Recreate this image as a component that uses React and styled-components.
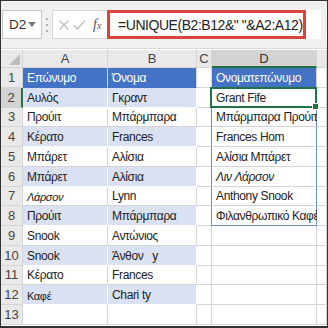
import React from "react";
import styled, { createGlobalStyle, css } from "styled-components";

const GlobalStyle = createGlobalStyle`
  html, body {
    margin: 0;
    padding: 0;
    background: #ffffff;
  }
  * {
    box-sizing: border-box;
  }
`;

const BLUE = "#4472c4";
const BAND = "#d9e1f2";
const GRID = "#d4d4d4";
const GREEN = "#217346";

const Frame = styled.div`
  width: 328px;
  height: 328px;
  border: 1px solid #333;
  border-bottom-width: 2px;
  overflow: hidden;
  font-family: "Liberation Sans", Arial, sans-serif;
  background: #fff;
  display: flex;
  flex-direction: column;
`;

const FormulaBar = styled.div`
  height: 48px;
  flex: none;
  background: #f0f0f0;
  display: flex;
  align-items: center;
  padding: 0 6px 0 1px;
  border-bottom: 1px solid #dadada;
`;

const NameBox = styled.div`
  width: 40px;
  height: 29px;
  flex: none;
  background: #fff;
  border: 1px solid #c6c6c6;
  display: flex;
  align-items: center;
  justify-content: space-between;
  padding: 0 5px 0 6px;
  font-size: 13.5px;
  color: #333;
`;

const Caret = styled.span`
  width: 0;
  height: 0;
  border-left: 4px solid transparent;
  border-right: 4px solid transparent;
  border-top: 5px solid #777;
`;

const Dots = styled.div`
  width: 8px;
  height: 14px;
  margin: 0 1px;
  display: flex;
  flex-direction: column;
  align-items: center;
  justify-content: space-between;
  span {
    width: 2px;
    height: 2px;
    background: #b0b0b0;
  }
`;

const IconBox = styled.div`
  width: 54px;
  height: 29px;
  flex: none;
  background: #fff;
  border: 1px solid #d6d6d6;
  border-right: none;
  display: flex;
  align-items: center;
  gap: 3px;
  padding-left: 5px;
`;

const Fx = styled.span`
  font-family: "Liberation Serif", "Times New Roman", serif;
  font-style: italic;
  font-size: 14px;
  color: #555;
  margin-left: 4px;
  sub {
    font-size: 10px;
    vertical-align: baseline;
  }
`;

const FormulaInput = styled.div`
  flex: 1;
  height: 29px;
  background: #fff;
  display: flex;
  align-items: center;
`;

const Highlight = styled.div`
  height: 29px;
  width: 199px;
  margin-left: 1px;
  border: 3px solid #d8453f;
  display: flex;
  align-items: center;
  padding-left: 8px;
  font-size: 14px;
  letter-spacing: -0.45px;
  color: #222;
  white-space: pre;
`;

const Sheet = styled.div`
  display: grid;
  grid-template-columns: 22px 85px 89px 15px 105px 1fr;
  grid-template-rows: 18px repeat(13, 19.75px);
  margin-top: 1px;
`;

const Corner = styled.div`
  background: #e9e9e9;
  border-right: 1px solid ${GRID};
  border-bottom: 1px solid ${GRID};
  position: relative;
  &::after {
    content: "";
    position: absolute;
    right: 2px;
    bottom: 2px;
    border-left: 11px solid transparent;
    border-bottom: 11px solid #bdbdbd;
  }
`;

const ColHead = styled.div`
  background: ${(p) => (p.$active ? "#d3d3d3" : "#e9e9e9")};
  border-right: 1px solid ${GRID};
  border-bottom: ${(p) => (p.$active ? `2px solid ${GREEN}` : `1px solid ${GRID}`)};
  color: ${(p) => (p.$active ? "#333" : "#444")};
  font-size: 13px;
  display: flex;
  align-items: center;
  justify-content: center;
`;

const RowHead = styled.div`
  background: ${(p) => (p.$active ? "#d3d3d3" : "#e9e9e9")};
  border-bottom: 1px solid ${GRID};
  border-right: ${(p) => (p.$active ? `2px solid ${GREEN}` : `1px solid ${GRID}`)};
  color: #444;
  font-size: 13px;
  display: flex;
  align-items: flex-end;
  justify-content: center;
  padding-bottom: 2px;
`;

const Cell = styled.div`
  background: ${(p) => (p.$fill === "head" ? BLUE : p.$fill === "band" ? BAND : "#fff")};
  color: ${(p) => (p.$fill === "head" ? "#fff" : "#222")};
  border-right: 1px solid ${(p) => (p.$fill === "band" ? "#fff" : GRID)};
  border-bottom: 1px solid ${(p) => (p.$fill === "head" ? BLUE : p.$fill === "band" ? "#fff" : GRID)};
  font-size: ${(p) => (p.$small ? "11px" : "12px")};
  letter-spacing: -0.35px;
  font-style: ${(p) => (p.$italic ? "italic" : "normal")};
  display: flex;
  align-items: flex-end;
  padding: 0 0 2px 4px;
  white-space: pre;
  ${(p) =>
    p.$spill &&
    css`
      border-left: 1px solid #6d8cc9;
      border-right: 1px solid #6d8cc9;
      margin-left: -1px;
    `}
  ${(p) =>
    p.$spillEnd &&
    css`
      border-bottom: 1px solid #6d8cc9;
    `}
  ${(p) =>
    p.$selected &&
    css`
      position: relative;
    `}
`;

const Selection = styled.div`
  position: absolute;
  inset: -1px -1px -1px -2px;
  border: 2px solid ${GREEN};
  pointer-events: none;
  &::after {
    content: "";
    position: absolute;
    right: -4px;
    bottom: -4px;
    width: 5px;
    height: 5px;
    background: ${GREEN};
    border: 1px solid #fff;
  }
`;

const lastNames = [
  "Επώνυμο", "Αυλός", "Προύιτ", "Κέρατο", "Μπάρετ", "Μπάρετ",
  "Λάρσον", "Προύιτ", "Snook", "Snook", "Κέρατο", "Καφέ",
];
const firstNames = [
  "Όνομα", "Γκραντ", "Μπάρμπαρα", "Frances", "Αλίσια", "Αλίσια",
  "Lynn", "Μπάρμπαρα", "Αντώνιος", "Άνθον   y", "Frances", "Chari ty",
];
const fullNames = [
  "Ονοματεπώνυμο", "Grant Fife", "Μπάρμπαρα Προύιτ", "Frances Hom",
  "Αλίσια Μπάρετ", "Λιν Λάρσον", "Anthony Snook", "Φιλανθρωπικό Καφέ",
];

const XIcon = () => (
  <svg width="12" height="12" viewBox="0 0 12 12">
    <path d="M1.5 1.5 L10.5 10.5 M10.5 1.5 L1.5 10.5" stroke="#c4c4c4" strokeWidth="1.6" />
  </svg>
);

const CheckIcon = () => (
  <svg width="13" height="12" viewBox="0 0 13 12">
    <path d="M1 6.5 L4.5 10 L12 1.5" stroke="#c4c4c4" strokeWidth="1.6" fill="none" />
  </svg>
);

const App = () => {
  const rows = Array.from({ length: 13 }, (_, i) => i);

  return (
    <Frame>
      <GlobalStyle />
      <FormulaBar>
        <NameBox>
          D2
          <Caret />
        </NameBox>
        <Dots>
          <span />
          <span />
          <span />
        </Dots>
        <IconBox>
          <XIcon />
          <CheckIcon />
          <Fx>
            f<sub>x</sub>
          </Fx>
        </IconBox>
        <FormulaInput>
          <Highlight>=UNIQUE(B2:B12&amp;" "&amp;A2:A12)</Highlight>
        </FormulaInput>
      </FormulaBar>

      <Sheet>
        <Corner />
        <ColHead>A</ColHead>
        <ColHead>B</ColHead>
        <ColHead>C</ColHead>
        <ColHead $active>D</ColHead>
        <ColHead />

        {rows.map((i) => {
          const fill = i === 0 ? "head" : i > 11 ? "none" : i % 2 === 1 ? "band" : "none";
          const inSpill = i >= 1 && i <= 7;
          return (
            <React.Fragment key={i}>
              <RowHead $active={i === 1}>{i + 1}</RowHead>
              <Cell $fill={fill} $italic={i === 6} $small={i === 6 || i === 11}>
                {lastNames[i] || ""}
              </Cell>
              <Cell $fill={fill}>{firstNames[i] || ""}</Cell>
              <Cell />
              <Cell
                $fill={i === 0 ? "head" : "none"}
                $spill={inSpill}
                $spillEnd={i === 7}
                $italic={i === 5}
                $selected={i === 1}
              >
                {fullNames[i] || ""}
                {i === 1 && <Selection />}
              </Cell>
              <Cell />
            </React.Fragment>
          );
        })}
      </Sheet>
    </Frame>
  );
};

export default App;
